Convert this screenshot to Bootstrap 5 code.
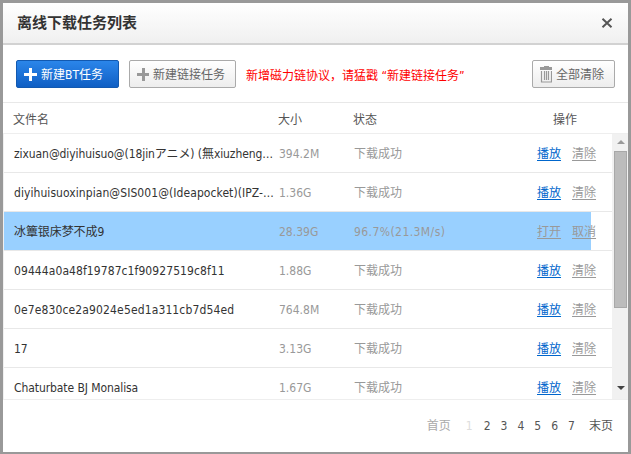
<!DOCTYPE html>
<html lang="zh-CN">
<head>
<meta charset="utf-8">
<meta name="viewport" content="width=device-width, initial-scale=1">
<title>离线下载任务列表</title>
<link href="https://cdn.jsdelivr.net/npm/bootstrap@5.3.0/dist/css/bootstrap.min.css" rel="stylesheet">
<style>
body{font:12px/18px "DejaVu Sans Condensed","Noto Sans CJK SC",sans-serif;color:#555;background:#999;height:454px;overflow:hidden}
.dialog{height:454px;border:3px solid #999;border-bottom-width:2px;background:#fff}
.titlebar{height:42px;padding:0 15px 0 14px;background:linear-gradient(#fff,#f0f0f0);border-bottom:2px solid #d2d2d2}
.titlebar h1{font-size:15px;line-height:20px;font-weight:700;color:#333}
.tools{height:58px;padding:15px 13px 0;border-bottom:1px solid #e8e8e8}
.tool{height:28px;padding:1px 10px 0 7px;border:1px solid #aaa;border-radius:2px;background:linear-gradient(#fff,#ededed);color:#666;font-size:12px;line-height:18px;white-space:nowrap}
.tool.main{width:103px;border-color:#1259b0;background:linear-gradient(#2b86ea,#0f5fc4);color:#fff}
.tool.link-task{width:107px;margin-left:10px}
.tool.clear-all{width:83px}
.tool:hover{color:#666}
.note{color:#f00;margin-left:10px;line-height:32px;white-space:nowrap}
.cols{display:grid;grid-template-columns:265px 75px 183px 1fr}
.heads{height:31px;padding-left:10px;border-bottom:1px solid #eee;line-height:34px;color:#555}
.heads .ops{padding-left:17px}
.viewport{height:266px;border-left:1px solid #f0f0f0;border-bottom:1px solid #eee}
.items{width:608px}
.item{height:39px;padding-left:10px;line-height:41px;border-bottom:1px solid #e8e8e8;color:#999;white-space:nowrap}
.item.active-task{background:linear-gradient(#99d0ff,#99d0ff) 0 0/587px 100% no-repeat}
.fname{color:#333;letter-spacing:-.08px}
.fname.roomy{letter-spacing:.07px}
.fname.hash{letter-spacing:.08px}
.fname.hash.wide{letter-spacing:.13px}
.rate{letter-spacing:.43px}
.item .act{color:#999;text-decoration:underline;text-underline-offset:2px;text-decoration-thickness:1px}
.item .play{color:#06c}
.act+.act{margin-left:11px}
.sbar{width:16px;background:#f1f1f1;padding:6px 1px 9px 2px}
.thumb{height:157px;width:13px;margin-top:7px;background:#bcbcbc;border:1px solid #a8a8a8}
.pages{height:52px;padding-right:15px;color:#555}
.pages .nums{gap:10px;margin:0 14px 0 15px}
.off{color:#aaa}
.now{color:#ddd;margin-right:1px}
</style>
<script src="https://cdn.jsdelivr.net/npm/bootstrap@5.3.0/dist/js/bootstrap.bundle.min.js"></script>
</head>
<body>
<main class="dialog d-flex flex-column">
<header class="titlebar d-flex align-items-center justify-content-between flex-shrink-0">
<h1 class="m-0">离线下载任务列表</h1>
<svg width="12" height="10" viewBox="0 0 12 10"><path d="M1.5 .8L10.5 9.2M10.5 .8L1.5 9.2" stroke="#555" stroke-width="2"/></svg>
</header>
<div class="tools d-flex align-items-start flex-shrink-0">
<button class="tool main btn d-flex align-items-center"><svg width="13" height="13" class="me-1"><path d="M6.5 0V13M0 6.5H13" stroke="#fff" stroke-width="3"/></svg><span>新建BT任务</span></button>
<button class="tool link-task btn d-flex align-items-center"><svg width="13" height="13" class="me-1"><path d="M6.5 0V13M0 6.5H13" stroke="#999" stroke-width="3"/></svg><span>新建链接任务</span></button>
<div class="note">新增磁力链协议，请猛戳 “新建链接任务”</div>
<button class="tool clear-all btn d-flex align-items-center ms-auto"><svg width="13" height="17" class="me-1" fill="none" stroke="#999"><path d="M4 .5H9"/><path d="M0 2.5H13" stroke-width="3"/><path d="M1.5 5V16H11.5V5M4.5 5V14M6.5 5V14M8.5 5V14" stroke-width="1.2"/></svg><span>全部清除</span></button>
</div>
<div class="heads cols flex-shrink-0"><span>文件名</span><span>大小</span><span>状态</span><span class="ops">操作</span></div>
<div class="viewport d-flex overflow-hidden flex-shrink-0">
<div class="items">
<div class="item cols"><span class="fname">zixuan@diyihuisuo@(18jinアニメ) (無xiuzheng…</span><span>394.2M</span><span>下载成功</span><span><a class="act play">播放</a><a class="act">清除</a></span></div>
<div class="item cols"><span class="fname roomy">diyihuisuoxinpian@SIS001@(Ideapocket)(IPZ-…</span><span>1.36G</span><span>下载成功</span><span><a class="act play">播放</a><a class="act">清除</a></span></div>
<div class="item cols active-task"><span class="fname">冰簟银床梦不成9</span><span>28.39G</span><span class="rate">96.7%(21.3M/s)</span><span><a class="act">打开</a><a class="act">取消</a></span></div>
<div class="item cols"><span class="fname hash">09444a0a48f19787c1f90927519c8f11</span><span>1.88G</span><span>下载成功</span><span><a class="act play">播放</a><a class="act">清除</a></span></div>
<div class="item cols"><span class="fname hash wide">0e7e830ce2a9024e5ed1a311cb7d54ed</span><span>764.8M</span><span>下载成功</span><span><a class="act play">播放</a><a class="act">清除</a></span></div>
<div class="item cols"><span class="fname">17</span><span>3.13G</span><span>下载成功</span><span><a class="act play">播放</a><a class="act">清除</a></span></div>
<div class="item cols"><span class="fname">Chaturbate BJ Monalisa</span><span>1.67G</span><span>下载成功</span><span><a class="act play">播放</a><a class="act">清除</a></span></div>
</div>
<div class="sbar d-flex flex-column align-items-center">
<svg width="8" height="4" class="d-block"><path d="M0 4L4 0L8 4Z" fill="#999"/></svg>
<div class="thumb"></div>
<svg width="8" height="4" class="d-block mt-auto"><path d="M0 0L4 4L8 0Z" fill="#444"/></svg>
</div>
</div>
<nav class="pages d-flex align-items-center justify-content-end">
<span class="off">首页</span>
<div class="nums d-flex"><span class="now">1</span><span>2</span><span>3</span><span>4</span><span>5</span><span>6</span><span>7</span></div>
<span>末页</span>
</nav>
</main>
</body>
</html>
